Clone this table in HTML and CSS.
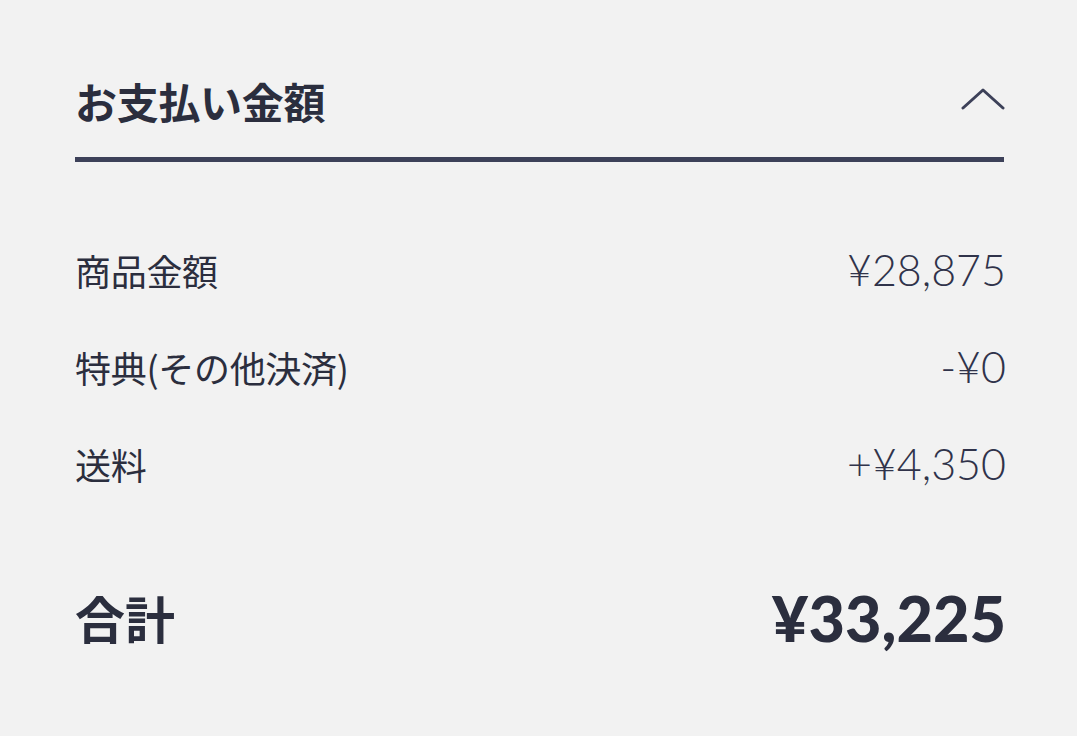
FILE: index.html
```html
<!DOCTYPE html>
<html lang="ja">
<head>
<meta charset="utf-8">
<link rel="stylesheet" href="styles.css">
</head>
<body>
<section class="payment">
  <header class="payment-head">
    <h2 class="payment-title">お支払い金額</h2>
    <svg class="chevron" width="44" height="24" viewBox="0 0 44 24"><path d="M2 21 L22 3 L42 21" fill="none" stroke="#3d4159" stroke-width="3" stroke-linecap="round" stroke-linejoin="round"/></svg>
  </header>
  <div class="payment-rows">
    <div class="row"><span class="label">商品金額</span><span class="amount">¥28,875</span></div>
    <div class="row"><span class="label">特典(その他決済)</span><span class="amount">-¥0</span></div>
    <div class="row"><span class="label">送料</span><span class="amount">+¥4,350</span></div>
  </div>
  <div class="total">
    <span class="total-label">合計</span>
    <span class="total-amount">¥33,225</span>
  </div>
</section>
</body>
</html>
```
FILE: styles.css
```css
html, body {
  margin: 0;
  padding: 0;
  background: #f2f2f2;
}
body {
  font-family: "Noto Sans CJK JP", "Noto Sans", sans-serif;
  color: #2b2e3e;
}
.payment {
  width: 929px;
  margin-left: 75px;
  padding-top: 73px;
}
.payment-head {
  display: flex;
  justify-content: space-between;
  align-items: center;
  height: 56px;
  padding-bottom: 28px;
  border-bottom: 5px solid #3d4159;
}
.payment-title {
  margin: 0;
  font-size: 42px;
  font-weight: 700;
  line-height: 56px;
  letter-spacing: -0.3px;
}
.chevron {
  display: block;
  margin-right: -1px;
  margin-top: -4px;
}
.payment-rows {
  display: flex;
  flex-direction: column;
  padding-top: 59px;
}
.row {
  display: flex;
  justify-content: space-between;
  align-items: center;
  height: 97px;
}
.label {
  font-size: 36px;
  font-weight: 400;
  letter-spacing: -0.3px;
}
.label-wide {
  letter-spacing: 0.5px;
}
.amount {
  font-family: Lato, "Noto Sans", sans-serif;
  font-size: 43px;
  font-weight: 300;
  margin-right: -2px;
  color: #30334a;
}
.total {
  display: flex;
  justify-content: space-between;
  align-items: center;
  margin-top: 65px;
  height: 80px;
}
.total-label {
  font-size: 50px;
  font-weight: 700;
}
.total-amount {
  font-family: Lato, "Noto Sans", sans-serif;
  font-size: 63px;
  font-weight: 900;
  margin-right: -2px;
}
```
